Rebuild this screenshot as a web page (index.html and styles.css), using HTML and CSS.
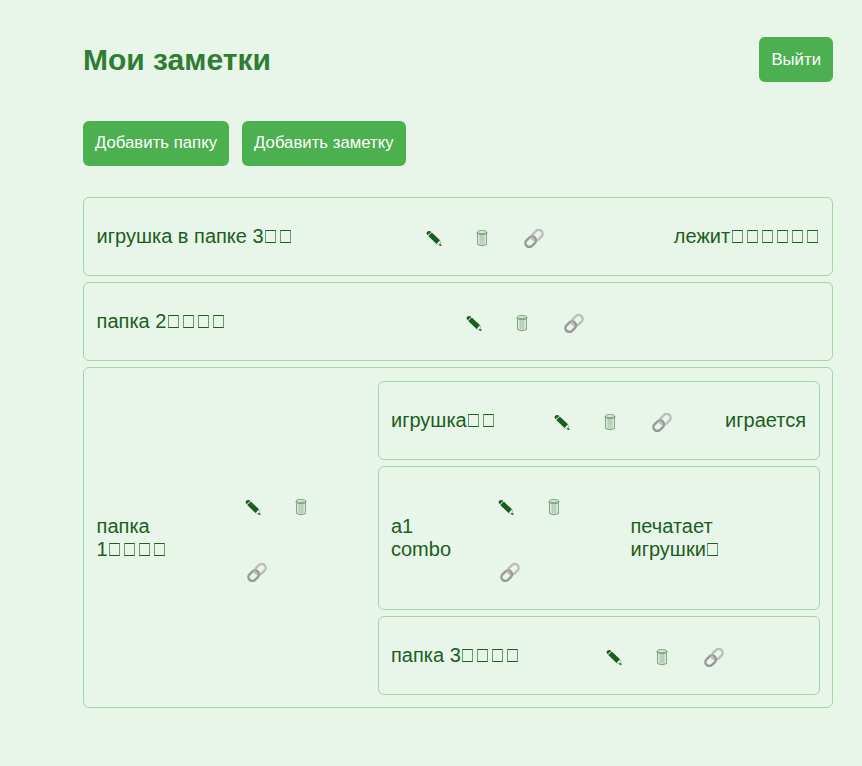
FILE: index.html
```html
<!DOCTYPE html>
<html lang="ru">
<head>
<meta charset="utf-8">
<title>Мои заметки</title>
<link rel="stylesheet" href="styles.css">
</head>
<body>
<svg class="sprite" aria-hidden="true">
  <symbol id="pencil" viewBox="0 0 16 16">
    <path d="M2.8.5Q4.2.1 5.2 1.4L1.7 4.8Q0 3.2.7 2Q1.3.8 2.8.5Z" fill="#1b5e20"/>
    <path d="M5.8 2 14 9.8 10.5 13.6 2.2 5.6Z" fill="#1b5e20"/>
    <path d="M14 9.8 15.3 15 10.5 13.6" fill="none" stroke="#1b5e20" stroke-width=".3"/>
    <path d="M14 13.3 15.6 15.7 13.2 14.4Z" fill="#1b5e20" stroke="#1b5e20" stroke-width=".4"/>
  </symbol>
  <symbol id="trash" viewBox="0 0 12 17">
    <g fill="none" stroke="#1b5e20" stroke-width=".75" opacity=".75">
      <ellipse cx="6" cy="2" rx="4.8" ry="1.4"/>
      <path d="M1.2 2V3.9Q6 5.6 10.8 3.9V2M1.6 4.4V14.6Q6 17 10.4 14.6V4.4"/>
      <path d="M4.1 5.2V14.5M6 5.2V14.8M7.9 5.2V14.5" stroke-width=".55"/>
    </g>
  </symbol>
  <symbol id="link" viewBox="0 0 20 20">
    <g fill="none" stroke-width="2.4">
      <rect x="7.4" y="2.9" width="11.8" height="7.8" rx="3.9" transform="rotate(-45 13.3 6.8)" stroke="#bdbdbd"/>
      <rect x=".8" y="9.3" width="11.8" height="7.8" rx="3.9" transform="rotate(-45 6.7 13.2)" stroke="#999"/>
      <path d="M7.9 8Q7.6 9.6 8.6 10.8" stroke="#bdbdbd"/>
    </g>
  </symbol>
</svg>
<main class="page">
  <header class="header">
    <h1>Мои заметки</h1>
    <button class="btn">Выйти</button>
  </header>
  <div class="actions">
    <button class="btn">Добавить папку</button>
    <button class="btn">Добавить заметку</button>
  </div>
  <section class="list">
    <article class="item item-first">
      <div class="name">игрушка в папке 3<i class="box"></i><i class="box"></i></div>
      <div class="tools"><svg class="pencil"><use href="#pencil"/></svg><svg class="trash"><use href="#trash"/></svg><svg class="link"><use href="#link"/></svg></div>
      <div class="note">лежит<i class="box"></i><i class="box"></i><i class="box"></i><i class="box"></i><i class="box"></i><i class="box"></i></div>
    </article>
    <article class="item item-second">
      <div class="name">папка 2<i class="box"></i><i class="box"></i><i class="box"></i><i class="box"></i></div>
      <div class="tools"><svg class="pencil"><use href="#pencil"/></svg><svg class="trash"><use href="#trash"/></svg><svg class="link"><use href="#link"/></svg></div>
    </article>
    <article class="item item-parent">
      <div class="name">папка<br>1<i class="box"></i><i class="box"></i><i class="box"></i><i class="box"></i></div>
      <div class="tools"><svg class="pencil"><use href="#pencil"/></svg><svg class="trash"><use href="#trash"/></svg><svg class="link"><use href="#link"/></svg></div>
      <div class="list">
        <article class="item item-toy">
          <div class="name">игрушка<i class="box"></i><i class="box"></i></div>
          <div class="tools"><svg class="pencil"><use href="#pencil"/></svg><svg class="trash"><use href="#trash"/></svg><svg class="link"><use href="#link"/></svg></div>
          <div class="note">играется</div>
        </article>
        <article class="item item-combo">
          <div class="name">а1<br>combo</div>
          <div class="tools"><svg class="pencil"><use href="#pencil"/></svg><svg class="trash"><use href="#trash"/></svg><svg class="link"><use href="#link"/></svg></div>
          <div class="text">печатает<br>игрушки<i class="box"></i></div>
        </article>
        <article class="item item-last">
          <div class="name">папка 3<i class="box"></i><i class="box"></i><i class="box"></i><i class="box"></i></div>
          <div class="tools"><svg class="pencil"><use href="#pencil"/></svg><svg class="trash"><use href="#trash"/></svg><svg class="link"><use href="#link"/></svg></div>
        </article>
      </div>
    </article>
  </section>
</main>
</body>
</html>
```
FILE: styles.css
```css
* { box-sizing: border-box; }
body {
  margin: 0;
  min-height: 766px;
  background: #e8f5e9;
  color: #1b5e20;
  font: 20px/23px "Liberation Sans", Arial, sans-serif;
}
.sprite { display: none; }
.page { padding: 37px 29px 0 83px; }
.header { display: flex; justify-content: space-between; align-items: center; height: 45px; }
h1 { margin: 0; color: #2e7d32; font-size: 30px; line-height: 45px; }
.btn {
  height: 45px;
  padding: 0 12px 1px;
  border: 0;
  border-radius: 6px;
  background: #4caf50;
  color: #fff;
  font: 16.75px "Liberation Sans", Arial, sans-serif;
}
.header .btn { padding: 1px 12px 0; }
.actions { display: flex; gap: 13px; margin: 39px 0 31px; }
.list { display: grid; gap: 6px; }
.item {
  display: grid;
  align-items: center;
  height: 79px;
  padding: 12px;
  border: 1px solid #a5d6a7;
  border-radius: 6px;
}
.item-first { grid-template-columns: 313.5px 157px 1fr; padding-left: 12.6px; }
.item-second { grid-template-columns: 353.4px 157px; padding-left: 12.6px; }
.item-parent {
  grid-template-columns: 132.4px 149px 442px;
  height: 341px;
  padding: 13px 12px 12px 12.6px;
}
.item-toy { grid-template-columns: 147px 157px 1fr; padding-right: 13px; }
.item-combo { grid-template-columns: 91px 148.5px 1fr; height: 144px; }
.item-last { grid-template-columns: 199.5px 157px; }
.name, .note, .text { white-space: nowrap; }
.note { text-align: right; }
.box {
  display: inline-block;
  width: 11px;
  height: 13px;
  margin: 0 2.4px 0 1.6px;
  border: 1px solid rgba(27, 94, 32, .6);
  border-top-color: #1b5e20;
  border-bottom-color: #1b5e20;
}
.tools { display: flex; flex-wrap: wrap; row-gap: 12px; margin: -2px 0; padding-top: 3px; }
.tools svg { height: 53px; }
.pencil { width: 48px; padding: 18.5px 16px; }
.trash { width: 48px; padding: 18px; }
.link { width: 56px; padding: 16.5px 18px; }
```
